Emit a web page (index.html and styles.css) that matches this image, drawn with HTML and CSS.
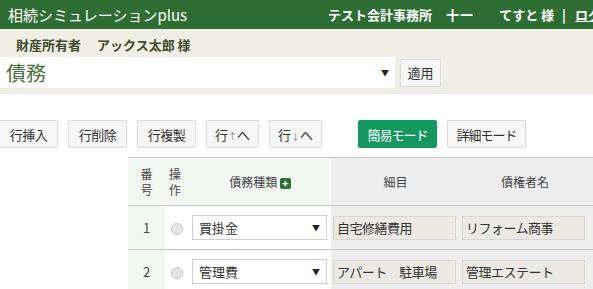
FILE: index.html
```html
<!DOCTYPE html>
<html lang="ja">
<head>
  <meta charset="UTF-8">
  <title>相続シミュレーションplus</title>
  <link rel="stylesheet" href="styles.css">
</head>
<body>

  <div class="topbar">
    <div class="app-title">相続シミュレーションplus</div>
    <div class="user-nav">
      <span class="office">テスト会計事務所</span>
      <span class="staff">十一</span>
      <span class="user">てすと 様</span>
      <span class="sep">|</span>
      <a class="logout" href="#">ログア</a>
    </div>
  </div>

  <div class="owner-bar">
    <div class="owner-name">財産所有者<span class="owner-space"></span>アックス太郎 様</div>
    <div class="category-row">
      <div class="category-select">
        <span>債務</span>
        <span class="arrow">▼</span>
      </div>
      <button class="btn apply">適用</button>
    </div>
  </div>

  <div class="toolbar">
    <button class="btn w-row">行挿入</button>
    <button class="btn w-row">行削除</button>
    <button class="btn w-row">行複製</button>
    <button class="btn w-move">行<span class="arw">↑</span>へ</button>
    <button class="btn w-move">行<span class="arw">↓</span>へ</button>
    <button class="btn w-mode btn-green mode-first">簡易モード</button>
    <button class="btn w-mode">詳細モード</button>
  </div>

  <table class="debt-table">
    <colgroup>
      <col class="c-no">
      <col class="c-op">
      <col class="c-kind">
      <col class="c-detail">
      <col class="c-creditor">
      <col class="c-more">
    </colgroup>
    <thead>
      <tr>
        <th class="th-left">番<br>号</th>
        <th class="th-left th-op">操<br>作</th>
        <th class="th-left">債務種類 <span class="plus">+</span></th>
        <th class="th-right">細目</th>
        <th class="th-right">債権者名</th>
        <th class="th-right"></th>
      </tr>
    </thead>
    <tbody>
      <tr>
        <td class="no">1</td>
        <td class="op"><span class="radio"></span></td>
        <td class="kind"><div class="row-select"><span>買掛金</span><span class="arrow">▼</span></div></td>
        <td class="gray"><div class="field">自宅修繕費用</div></td>
        <td class="gray"><div class="field">リフォーム商事</div></td>
        <td class="gray"></td>
      </tr>
      <tr>
        <td class="no">2</td>
        <td class="op"><span class="radio"></span></td>
        <td class="kind"><div class="row-select"><span>管理費</span><span class="arrow">▼</span></div></td>
        <td class="gray"><div class="field">アパート　駐車場</div></td>
        <td class="gray"><div class="field">管理エステート</div></td>
        <td class="gray"></td>
      </tr>
    </tbody>
  </table>

</body>
</html>
```

FILE: styles.css
```css
body {
  font-family: "Noto Sans CJK JP", "Noto Sans", sans-serif;
  font-size: 13px;
  color: #333;
  background: #fff;
  margin: 0;
  overflow: hidden;
  width: 593px;
}

.topbar {
  display: flex;
  align-items: center;
  height: 29px;
  padding-left: 8px;
  background: #2e6e33;
  color: #fff;
  white-space: nowrap;
  width: 700px;
}

.app-title {
  font-size: 15px;
  line-height: 29px;
}

.user-nav {
  margin-left: 141px;
  font-weight: bold;
  font-size: 13px;
  display: flex;
  align-items: center;
}

.office { margin-right: 14px; }
.staff { margin-right: 25px; letter-spacing: 1px; }
.user { margin-right: 8px; }
.sep { margin-right: 9px; }

.logout {
  color: #fff;
  text-decoration: underline;
}

.owner-bar {
  background: #f0eee5;
  padding: 6px 0 6px;
}

.owner-name {
  padding-left: 16px;
  font-weight: bold;
  color: #3d4b2e;
  line-height: 20px;
  margin-bottom: 2px;
}

.owner-space {
  display: inline-block;
  width: 16px;
}

.category-row {
  display: flex;
  align-items: center;
  gap: 5px;
}

.category-select {
  display: flex;
  align-items: center;
  justify-content: space-between;
  width: 395px;
  height: 31px;
  box-sizing: border-box;
  padding: 0 6px 0 6px;
  background: #fff;
  font-size: 20px;
  color: #4a6f40;
}

.category-select .arrow {
  font-size: 8px;
  color: #222;
}

.btn {
  font-family: inherit;
  font-size: 13px;
  color: #333;
  height: 28px;
  padding: 0;
  background: #f6f6f6;
  border: 1px solid #dadada;
  border-radius: 2px;
  cursor: pointer;
  white-space: nowrap;
}

.apply {
  width: 41px;
}

.toolbar {
  display: flex;
  gap: 10px;
  margin-top: 26px;
  margin-left: -1px;
}

.w-row { width: 59px; letter-spacing: -0.5px; }
.w-move { width: 53px; }
.w-mode { width: 79px; letter-spacing: -1px; }

.arw {
  color: #888;
  font-size: 9px;
}

.btn-green {
  background: #14985f;
  border-color: #14985f;
  color: #fff;
}

.mode-first {
  margin-left: 26px;
}

.debt-table {
  margin-top: 9px;
  margin-left: 128px;
  border-collapse: collapse;
  table-layout: fixed;
  width: 522px;
}

.c-no { width: 37px; }
.c-op { width: 24px; }
.c-kind { width: 142px; }
.c-detail { width: 129px; }
.c-creditor { width: 130px; }
.c-more { width: 60px; }

.debt-table th {
  height: 45px;
  font-weight: normal;
  font-size: 12px;
  line-height: 16px;
  border-top: 1px solid #c8c8c8;
  border-bottom: 1px solid #c8c8c8;
  color: #444;
}

.th-left {
  background: #f3f7f1;
}

.th-op {
  text-align: left;
  padding-left: 4px;
}

.th-right {
  background: #eeeeee;
}

.plus {
  display: inline-block;
  width: 11px;
  height: 11px;
  line-height: 11px;
  background: #2e6e33;
  color: #fff;
  font-size: 11px;
  font-weight: bold;
  border-radius: 2px;
  text-align: center;
  vertical-align: -1px;
}

.debt-table td {
  height: 43px;
  border-bottom: 1px solid #c8c8c8;
  padding: 0;
}

.no {
  background: #f3f7f1;
  text-align: center;
  color: #444;
}

.op {
  text-align: left;
}

.radio {
  display: inline-block;
  width: 10px;
  height: 10px;
  border: 1px solid #c4c4c4;
  border-radius: 50%;
  background: #e6e6e6;
  vertical-align: middle;
  margin-left: 6px;
}

.kind {
  padding-left: 2px;
}

.debt-table td.kind {
  padding-left: 3px;
}

.row-select {
  display: flex;
  align-items: center;
  justify-content: space-between;
  width: 135px;
  height: 25px;
  box-sizing: border-box;
  padding: 0 6px;
  border: 1px solid #cfcfcf;
  background: #fff;
  color: #333;
}

.row-select .arrow {
  font-size: 8px;
  color: #222;
}

.gray {
  background: #eeeeee;
}

.debt-table td.gray {
  padding-left: 2px;
}

.field {
  width: 123px;
  height: 24px;
  line-height: 22px;
  box-sizing: border-box;
  padding: 0 3px;
  border: 1px solid #d8d5cc;
  background: #ebe9e2;
  color: #333;
  white-space: nowrap;
  overflow: hidden;
  letter-spacing: -0.5px;
}
```
